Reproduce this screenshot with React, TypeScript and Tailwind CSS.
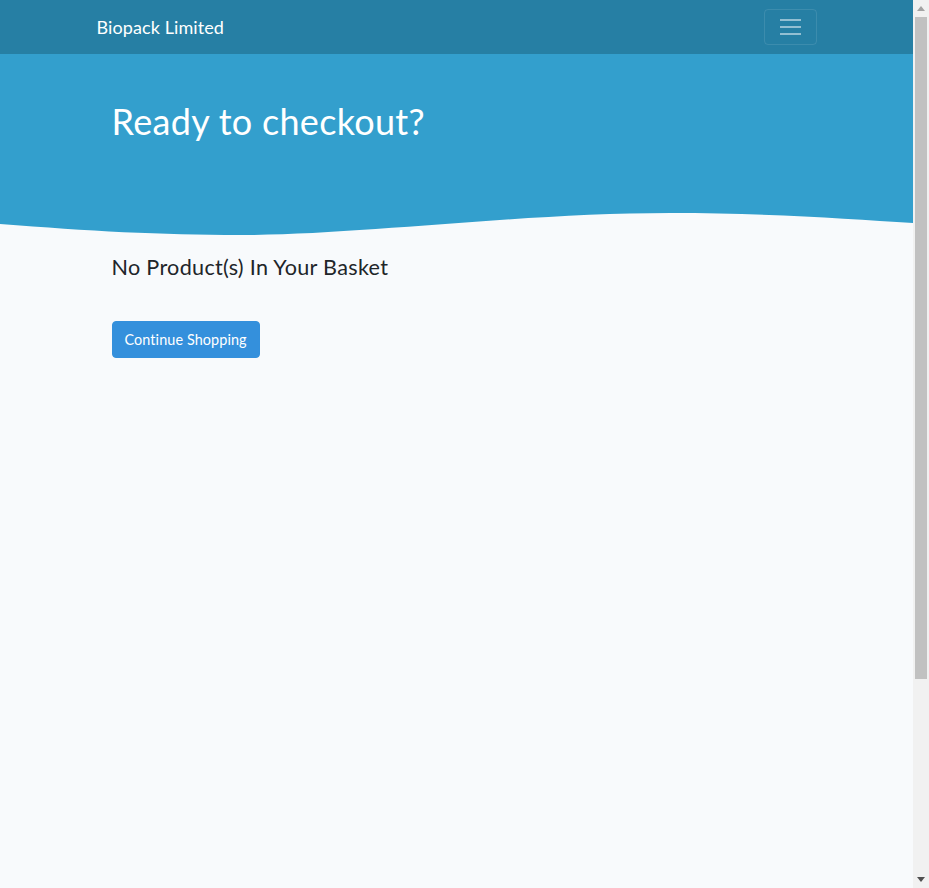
function Scrollbar() {
  return (
    <div className="w-[16px] shrink-0 h-screen bg-[#f1f1f1] flex flex-col">
      <div className="h-[17px] flex items-center justify-center">
        <svg width="8" height="5" viewBox="0 0 8 5">
          <path d="M0,5 L4,0 L8,5 Z" fill="#a3a3a3" />
        </svg>
      </div>
      <div className="flex-1 px-[2px]">
        <div className="h-[662px] bg-[#c1c1c1]" />
      </div>
      <div className="h-[17px] flex items-center justify-center">
        <svg width="8" height="5" viewBox="0 0 8 5">
          <path d="M0,0 L8,0 L4,5 Z" fill="#505050" />
        </svg>
      </div>
    </div>
  )
}

export default function App() {
  return (
    <div className="h-screen flex overflow-hidden bg-[#f8fafc] text-[#212529] font-['Lato',sans-serif]">
      <div className="flex-1 min-w-0">
        {/* navbar */}
        <nav className="bg-[#267fa4]">
          <div className="max-w-[720px] mx-auto flex items-center justify-between h-[54px]">
            <a href="#" className="text-white text-[18px] leading-[27px] tracking-[0.1px]">
              Biopack Limited
            </a>
            <button
              type="button"
              className="w-[53px] h-[36px] border border-white/10 rounded-[4px] flex flex-col items-center justify-center gap-[5px]"
            >
              <span className="block w-[21px] h-[2px] bg-white/50" />
              <span className="block w-[21px] h-[2px] bg-white/50" />
              <span className="block w-[21px] h-[2px] bg-white/50" />
            </button>
          </div>
        </nav>

        {/* hero */}
        <header className="bg-[#339fcd]">
          <div className="max-w-[720px] mx-auto px-[15px] pt-[46px] pb-[67px]">
            <h1 className="text-white text-[36px] leading-[43px] tracking-[0.3px]">Ready to checkout?</h1>
          </div>
        </header>
        <svg className="block w-full h-[26px]" viewBox="0 0 913 26" preserveAspectRatio="none">
          <path
            d="M0,14 C90,21 160,25 240,25 C360,25 520,3 670,3 C770,3 850,9 913,13 L913,0 L0,0 Z"
            fill="#339fcd"
          />
        </svg>

        {/* basket */}
        <main className="max-w-[720px] mx-auto px-[15px] pt-[18px]">
          <h4 className="text-[21.6px] leading-[26px] tracking-[0.3px]">No Product(s) In Your Basket</h4>
          <a
            href="#"
            className="inline-block mt-[41px] bg-[#3490dc] text-white text-[14.4px] leading-[23px] px-[12px] py-[6px] rounded-[4px] border border-[#3490dc] tracking-[0.1px]"
          >
            Continue Shopping
          </a>
        </main>
      </div>
      <Scrollbar />
    </div>
  )
}
